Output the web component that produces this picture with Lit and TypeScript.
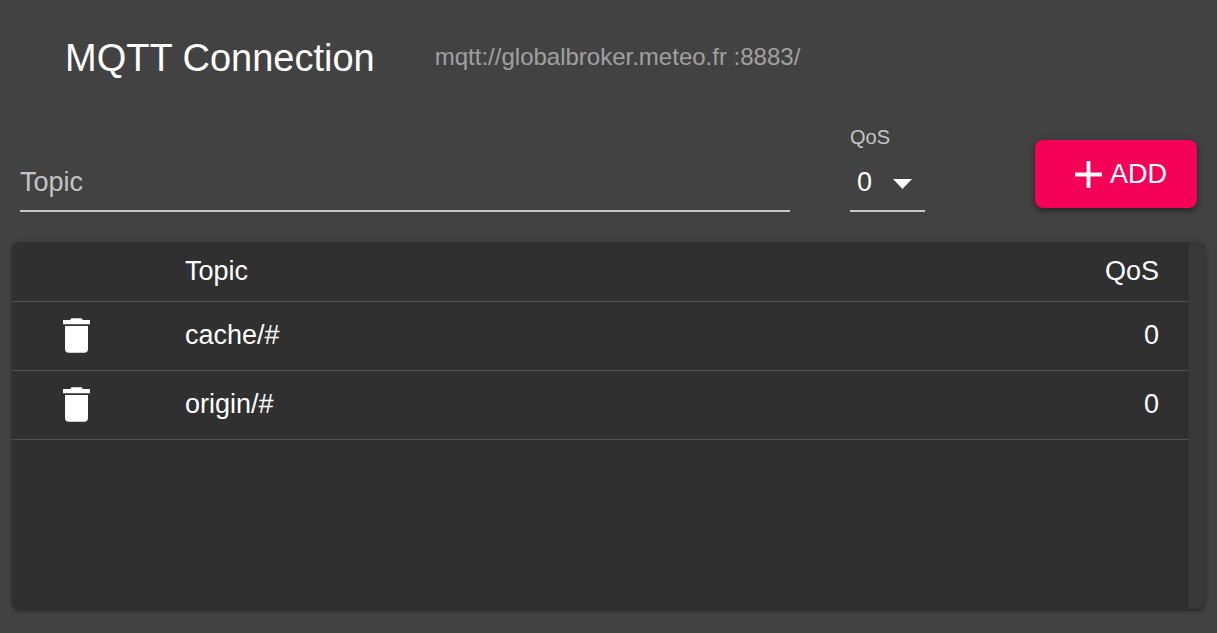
import { LitElement, html, css } from "lit";
import { customElement, state } from "lit/decorators.js";

interface Subscription {
  topic: string;
  qos: number;
}

@customElement("app-root")
export class AppRoot extends LitElement {
  static styles = css`
    :host {
      display: flex;
      flex-direction: column;
      box-sizing: border-box;
      min-height: 100vh;
      padding: 0 12px 24px;
      background: #424242;
      color: #fff;
      font-family: "Liberation Sans", Arial, sans-serif;
      font-size: 27px;
      line-height: 30px;
    }
    * {
      box-sizing: border-box;
    }
    .header {
      display: flex;
      align-items: center;
      gap: 60px;
      padding: 36px 53px 0;
    }
    .title {
      margin: 0;
      font-size: 38px;
      line-height: 44px;
      font-weight: 400;
    }
    .url {
      color: rgba(255, 255, 255, 0.5);
      font-size: 24px;
      padding-bottom: 2px;
    }
    .form {
      display: flex;
      align-items: flex-end;
      gap: 60px;
      padding: 45px 8px 30px;
    }
    .topic {
      flex: 1;
      min-width: 0;
      height: 60px;
      padding: 2px 0 0;
      border: 0;
      border-bottom: 2px solid rgba(255, 255, 255, 0.7);
      border-radius: 0;
      outline: 0;
      background: none;
      color: inherit;
      font: inherit;
    }
    .topic::placeholder {
      color: rgba(255, 255, 255, 0.7);
      opacity: 1;
    }
    .qos {
      display: grid;
      row-gap: 3px;
      width: 75px;
      margin-right: 50px;
    }
    .qos-label {
      grid-area: 1 / 1;
      color: rgba(255, 255, 255, 0.7);
      font-size: 20px;
      line-height: 24px;
    }
    .select {
      grid-area: 2 / 1;
      appearance: none;
      height: 60px;
      padding: 2px 30px 0 7px;
      border: 0;
      border-bottom: 2px solid rgba(255, 255, 255, 0.7);
      border-radius: 0;
      outline: 0;
      background: none;
      color: inherit;
      font: inherit;
    }
    .select option {
      background: #424242;
    }
    .arrow {
      grid-area: 2 / 1;
      place-self: center end;
      width: 19px;
      height: 10px;
      margin: 4px 13px 0 0;
      pointer-events: none;
    }
    .add {
      display: flex;
      align-items: center;
      justify-content: flex-end;
      gap: 8px;
      width: 162px;
      height: 68px;
      margin-bottom: 4px;
      padding: 0 30px;
      border: 0;
      border-radius: 8px;
      background: #f50057;
      box-shadow: 0 3px 4px rgba(0, 0, 0, 0.3), 0 1px 8px rgba(0, 0, 0, 0.2);
      color: #fff;
      font: inherit;
      cursor: pointer;
    }
    .plus {
      width: 27px;
      height: 27px;
    }
    .paper {
      flex: 1;
      display: flex;
      overflow: hidden;
      border-radius: 8px;
      background: #303030;
      box-shadow: 0 2px 3px rgba(0, 0, 0, 0.3), 0 1px 6px rgba(0, 0, 0, 0.16);
    }
    .scroller {
      flex: 1;
      min-width: 0;
    }
    .track {
      flex: none;
      width: 16px;
      background: #393939;
    }
    .table {
      width: 100%;
      border-collapse: separate;
      border-spacing: 0;
    }
    .cell {
      height: 69px;
      padding: 0 30px 2px;
      border-bottom: 1px solid #515151;
      font-weight: 400;
      text-align: left;
    }
    .head {
      height: 60px;
    }
    .action {
      width: 143px;
    }
    .number {
      text-align: right;
    }
    .delete {
      display: grid;
      place-items: center;
      width: 68px;
      height: 60px;
      padding: 0;
      border: 0;
      background: none;
      color: inherit;
      cursor: pointer;
    }
    .bin {
      width: 27px;
      height: 35px;
    }
  `;

  @state() private subscriptions: Subscription[] = [
    { topic: "cache/#", qos: 0 },
    { topic: "origin/#", qos: 0 },
  ];
  @state() private topic = "";
  @state() private qos = 0;

  private add() {
    if (!this.topic) return;
    this.subscriptions = [...this.subscriptions, { topic: this.topic, qos: this.qos }];
    this.topic = "";
  }

  private remove(item: Subscription) {
    this.subscriptions = this.subscriptions.filter((s) => s !== item);
  }

  render() {
    return html`
      <header class="header">
        <h1 class="title">MQTT Connection</h1>
        <span class="url">mqtt://globalbroker.meteo.fr :8883/</span>
      </header>
      <form class="form" @submit=${(e: Event) => { e.preventDefault(); this.add(); }}>
        <input
          class="topic"
          type="text"
          placeholder="Topic"
          aria-label="Topic"
          .value=${this.topic}
          @input=${(e: Event) => (this.topic = (e.target as HTMLInputElement).value)}
        />
        <div class="qos">
          <label class="qos-label" for="qos">QoS</label>
          <select
            class="select"
            id="qos"
            @change=${(e: Event) => (this.qos = Number((e.target as HTMLSelectElement).value))}
          >
            <option value="0" selected>0</option>
            <option value="1">1</option>
            <option value="2">2</option>
          </select>
          <svg class="arrow" viewBox="0 0 19 10" fill="currentColor" aria-hidden="true">
            <path d="M0 0h19l-9.500 10z" />
          </svg>
        </div>
        <button class="add" type="submit">
          <svg class="plus" viewBox="5 5 14 14" fill="currentColor" aria-hidden="true">
            <path d="M19 13h-6v6h-2v-6H5v-2h6V5h2v6h6z" />
          </svg>
          ADD
        </button>
      </form>
      <section class="paper">
        <div class="scroller">
          <table class="table">
            <thead>
              <tr>
                <th class="cell head action"></th>
                <th class="cell head" scope="col">Topic</th>
                <th class="cell head number" scope="col">QoS</th>
              </tr>
            </thead>
            <tbody>
              ${this.subscriptions.map(
                (item) => html`
                  <tr>
                    <td class="cell action">
                      <button class="delete" type="button" aria-label="Delete" @click=${() => this.remove(item)}>
                        <svg class="bin" viewBox="0 0 27 35" fill="currentColor" aria-hidden="true">
                          <path d="M0 2h7l1.500-1.700h10L20 2h7v4.300H0z" />
                          <path d="M2 8h23v23a3.700 3.700 0 0 1-3.700 3.700H5.700A3.700 3.700 0 0 1 2 31z" />
                        </svg>
                      </button>
                    </td>
                    <td class="cell">${item.topic}</td>
                    <td class="cell number">${item.qos}</td>
                  </tr>
                `
              )}
            </tbody>
          </table>
        </div>
        <div class="track"></div>
      </section>
    `;
  }
}
